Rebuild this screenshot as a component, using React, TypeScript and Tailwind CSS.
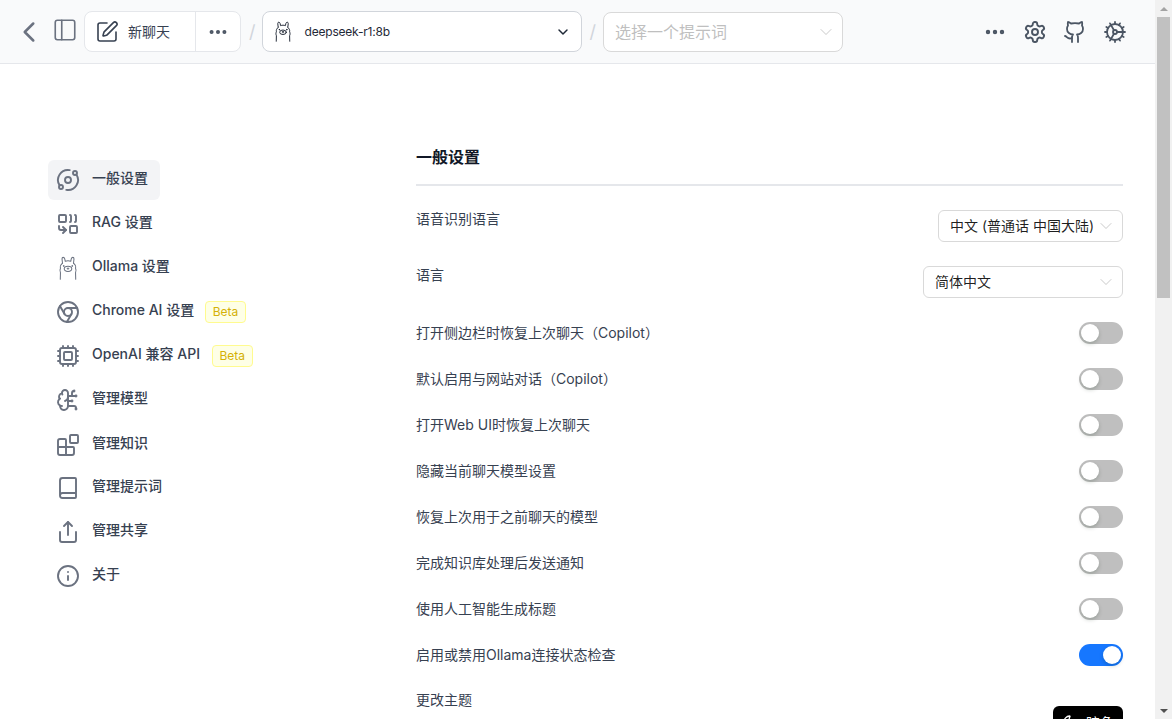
import React from "react";
import {
  Blocks,
  Book,
  BrainCircuit,
  ChevronDown,
  ChevronLeft,
  Chrome,
  Combine,
  Cog,
  Cpu,
  Ellipsis,
  Github,
  Info,
  Moon,
  Orbit,
  PanelLeft,
  Share,
  SquarePen,
} from "lucide-react";

function Llama({ className }: { className?: string }) {
  return (
    <svg className={className} viewBox="0 0 24 28" fill="none" stroke="currentColor" strokeWidth="1.2" strokeLinecap="round" strokeLinejoin="round">
      <path d="M5.6 8.4 L5 3.4 C5 1 7.6 1 8.2 3.4 L8.8 6.2 C10.8 5.4 13.2 5.4 15.2 6.2 L15.8 3.4 C16.4 1 19 1 19 3.4 L18.4 8.4" />
      <path d="M5.6 8.4 C3.4 10 2.8 12.4 3.2 14.4 C2.4 16 2.4 18 3.2 19.6 L3 27" />
      <path d="M18.4 8.4 C20.6 10 21.2 12.4 20.8 14.4 C21.6 16 21.6 18 20.8 19.6 L21 27" />
      <ellipse cx="12" cy="15" rx="4.4" ry="3" />
      <path d="M11 14.4 h2 M12 14.4 v1.2" />
      <circle cx="7" cy="11.6" r="0.4" />
      <circle cx="17" cy="11.6" r="0.4" />
    </svg>
  );
}

// lobed gear, lucide's Settings from before the redraw
function LobedGear({ className }: { className?: string }) {
  return (
    <svg className={className} viewBox="0 0 24 24" fill="none" stroke="currentColor" strokeWidth="1.9" strokeLinecap="round" strokeLinejoin="round">
      <path d="M12.22 2h-.44a2 2 0 0 0-2 2v.18a2 2 0 0 1-1 1.73l-.43.25a2 2 0 0 1-2 0l-.15-.08a2 2 0 0 0-2.73.73l-.22.38a2 2 0 0 0 .73 2.73l.15.1a2 2 0 0 1 1 1.72v.51a2 2 0 0 1-1 1.74l-.15.09a2 2 0 0 0-.73 2.73l.22.38a2 2 0 0 0 2.73.73l.15-.08a2 2 0 0 1 2 0l.43.25a2 2 0 0 1 1 1.73V20a2 2 0 0 0 2 2h.44a2 2 0 0 0 2-2v-.18a2 2 0 0 1 1-1.73l.43-.25a2 2 0 0 1 2 0l.15.08a2 2 0 0 0 2.73-.73l.22-.39a2 2 0 0 0-.73-2.73l-.15-.08a2 2 0 0 1-1-1.74v-.5a2 2 0 0 1 1-1.74l.15-.09a2 2 0 0 0 .73-2.73l-.22-.38a2 2 0 0 0-2.73-.73l-.15.08a2 2 0 0 1-2 0l-.43-.25a2 2 0 0 1-1-1.73V4a2 2 0 0 0-2-2z" />
      <circle cx="12" cy="12" r="3" />
    </svg>
  );
}

const navItems = [
  { label: "一般设置", icon: Orbit, active: true, mb: "mb-1" },
  { label: "RAG 设置", icon: Combine, mb: "mb-1" },
  { label: "Ollama 设置", icon: Llama, mb: "mb-1" },
  { label: "Chrome AI 设置", icon: Chrome, beta: "-ml-px", mb: "mb-1" },
  { label: "OpenAI 兼容 API", icon: Cpu, beta: "ml-0", mb: "mb-1" },
  { label: "管理模型", icon: BrainCircuit, mb: "mb-[5px]" },
  { label: "管理知识", icon: Blocks, mb: "mb-[3px]" },
  { label: "管理提示词", icon: Book, mb: "mb-1" },
  { label: "管理共享", icon: Share, mb: "mb-1" },
  { label: "关于", icon: Info, mb: "" },
];

const toggles = [
  { label: "打开侧边栏时恢复上次聊天（Copilot）", on: false },
  { label: "默认启用与网站对话（Copilot）", on: false },
  { label: "打开Web UI时恢复上次聊天", on: false },
  { label: "隐藏当前聊天模型设置", on: false },
  { label: "恢复上次用于之前聊天的模型", on: false },
  { label: "完成知识库处理后发送通知", on: false },
  { label: "使用人工智能生成标题", on: false },
  { label: "启用或禁用Ollama连接状态检查", on: true },
];

function Toggle({ on }: { on: boolean }) {
  return (
    <div className={`flex h-[22px] w-11 rounded-full p-0.5 ${on ? "justify-end bg-[#1677ff]" : "justify-start bg-[#bfbfbf]"}`}>
      <div className="h-[18px] w-[18px] rounded-full bg-white shadow-[0_2px_4px_0_rgba(0,35,11,0.2)]" />
    </div>
  );
}

function SelectBox({ text, width }: { text: string; width: string }) {
  return (
    <div className={`flex h-8 items-center justify-between rounded-md border border-[#d9d9d9] bg-white pl-[11px] pr-1.5 text-[14px] text-[#000000e0] ${width}`}>
      <span className="mb-[2px] whitespace-nowrap">{text}</span>
      <ChevronDown className="h-5 w-5 shrink-0 text-[#bfbfbf]" strokeWidth={1} />
    </div>
  );
}

export default function App() {
  return (
    <div className="flex h-[719px] w-[1172px] overflow-hidden bg-white font-['Inter','Noto_Sans_CJK_SC',sans-serif]">
      <div className="flex min-w-0 flex-1 flex-col">
        <header className="flex h-[64px] shrink-0 items-center border-b border-[#e5e7eb] bg-[#f9fafb] pl-3 pr-[28px]">
          <ChevronLeft className="h-[34px] w-[34px] shrink-0 text-[#6b7280]" strokeWidth={1.8} />
          <PanelLeft className="-mt-1 ml-1.5 h-[26px] w-[26px] shrink-0 text-[#6b7280]" strokeWidth={1.5} />
          <div className="ml-1.5 flex h-[41px] w-[157px] shrink-0 items-center rounded-lg border border-[#e5e7eb] bg-white">
            <div className="flex h-full w-[111px] items-center gap-[9px] border-r border-[#e5e7eb] pl-[10px]">
              <SquarePen className="h-6 w-6 text-[#374151]" strokeWidth={1.6} />
              <span className="text-[14px] text-[#374151]">新聊天</span>
            </div>
            <div className="flex flex-1 justify-center">
              <Ellipsis className="h-[22px] w-[22px] text-[#4b5563]" strokeWidth={2.4} />
            </div>
          </div>
          <span className="ml-2 mr-1.5 text-lg text-[#d1d5db]">/</span>
          <div className="flex h-[41px] w-[320px] shrink-0 items-center rounded-lg border border-[#d1d5db] bg-white pl-[11px] pr-[10px]">
            <Llama className="h-[21px] w-[18px] text-[#111827]" />
            <span className="ml-[13px] flex-1 text-[12px] tracking-[-0.2px] text-[#1f2937]">deepseek-r1:8b</span>
            <ChevronDown className="h-4 w-4 text-[#1f2937]" strokeWidth={2.2} />
          </div>
          <span className="ml-2 mr-[7px] text-lg text-[#d1d5db]">/</span>
          <div className="flex h-[40px] w-[240px] shrink-0 items-center justify-between rounded-lg border border-[#d9d9d9] bg-white pl-[11px] pr-1.5">
            <span className="text-[16px] text-[#bfbfbf]">选择一个提示词</span>
            <ChevronDown className="h-5 w-5 text-[#bfbfbf]" strokeWidth={1} />
          </div>
          <div className="ml-auto flex items-center gap-4">
            <Ellipsis className="h-6 w-6 text-[#4b5563]" strokeWidth={2.4} />
            <LobedGear className="h-6 w-6 text-[#4b5563]" />
            <Github className="h-6 w-6 text-[#4b5563]" strokeWidth={1.8} />
            <Cog className="h-6 w-6 text-[#4b5563]" strokeWidth={1.8} />
          </div>
        </header>
        <div className="flex min-h-0 flex-1 overflow-hidden pl-[48px] pr-[32px] pt-[80px]">
          <nav className="w-[368px] shrink-0 pt-4">
            {navItems.map((item) => {
              const Icon = item.icon;
              return (
                <div
                  key={item.label}
                  className={`flex h-10 items-center gap-3 rounded-md pl-2 text-[14px] font-medium text-[#374151] ${item.mb} ${item.active ? "w-[112px] bg-[#f3f4f6]" : ""}`}
                >
                  <Icon className="h-6 w-6 shrink-0 text-[#6b7280]" strokeWidth={1.9} />
                  <span className="mb-[5px] whitespace-nowrap">{item.label}</span>
                  {item.beta && (
                    <span className={`rounded-[4px] border border-[#fffb8f] bg-[#feffe6] px-[6.5px] text-[12px] font-normal leading-[20px] text-[#d4b106] ${item.beta}`}>
                      Beta
                    </span>
                  )}
                </div>
              );
            })}
          </nav>
          <main className="min-w-0 flex-1">
            <h2 className="mt-px pb-[15px] text-[16px] font-semibold leading-[24px] text-[#111827]">一般设置</h2>
            <div className="h-[2px] bg-[#e5e7eb]" />
            <div className="mt-6 flex h-8 items-start justify-between text-[14px] text-[#374151]">
              <span className="-mt-[2px]">语音识别语言</span>
              <SelectBox text="中文 (普通话 中国大陆)" width="w-[185px]" />
            </div>
            <div className="mt-6 flex h-8 items-start justify-between text-[14px] text-[#374151]">
              <span className="-mt-[2px]">语言</span>
              <SelectBox text="简体中文" width="w-[200px]" />
            </div>
            <div className="mt-6 flex flex-col gap-6">
              {toggles.map((t) => (
                <div key={t.label} className="flex h-[22px] items-center justify-between text-[14px] text-[#374151]">
                  <span className="mb-[2px]">{t.label}</span>
                  <Toggle on={t.on} />
                </div>
              ))}
            </div>
            <div className="mt-[23px] flex items-start justify-between text-[14px] text-[#374151]">
              <span>更改主题</span>
              <div className="mt-[17px] flex h-8 w-[70px] items-center justify-center gap-2 rounded-md bg-black text-[14px] text-white">
                <Moon className="h-4 w-4" />
                <span>暗色</span>
              </div>
            </div>
          </main>
        </div>
      </div>
      <div className="flex w-[17px] shrink-0 flex-col bg-[#f1f1f1]">
        <div className="flex h-[17px] items-center justify-center">
          <div className="h-0 w-0 border-x-[4px] border-b-[4px] border-x-transparent border-b-[#a3a3a3]" />
        </div>
        <div className="mx-0.5 h-[281px] bg-[#c1c1c1]" />
        <div className="flex-1" />
        <div className="flex h-[17px] items-center justify-center">
          <div className="h-0 w-0 border-x-[4px] border-t-[4px] border-x-transparent border-t-[#505050]" />
        </div>
      </div>
    </div>
  );
}
